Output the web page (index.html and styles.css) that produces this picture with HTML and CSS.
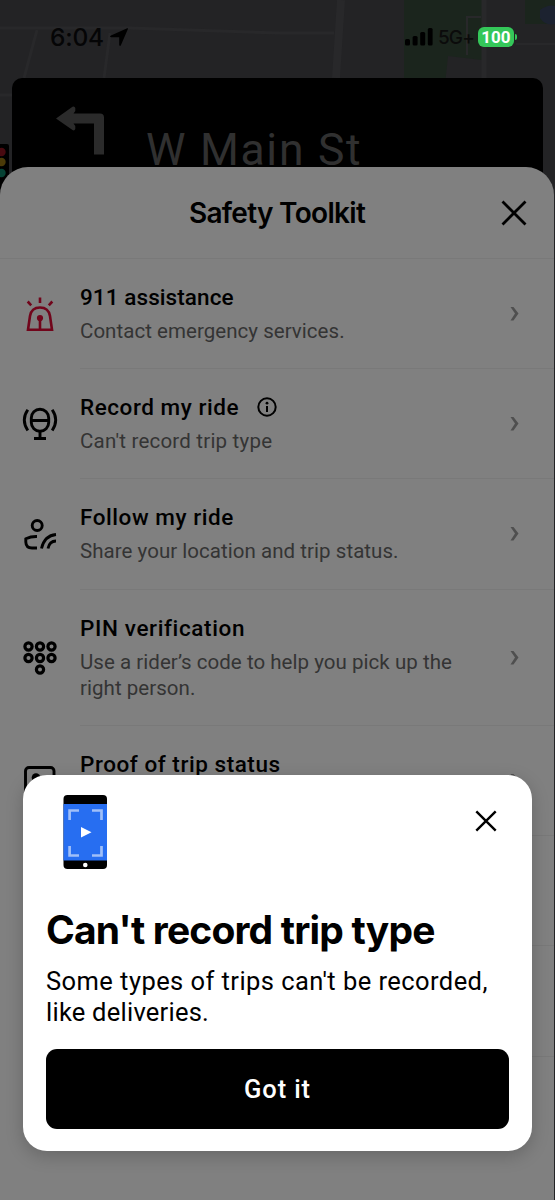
FILE: index.html
```html
<!DOCTYPE html>
<html lang="en">
<head>
<meta charset="utf-8">
<title>Safety Toolkit</title>
<link rel="stylesheet" href="styles.css">
</head>
<body>
<main class="screen">
  <svg class="map" viewBox="0 0 555 200" width="555" height="200" fill="none">
    <path fill="#1b251d" d="M404 0h78v60l-34-4-3 28h-41z"/>
    <path fill="#1b251d" d="M525 0h30v24h-30z"/>
    <path fill="#1c2230" d="M540 10q8-6 15-4v18q-10 2-15-6z"/>
    <g stroke="#28282a" stroke-width="3">
      <path d="M0 28L130 28 280 33H334"/>
      <path d="M37 30L24 78M110 33L104 78M0 95H12"/>
      <path stroke-width="8" d="M341 0L336 78"/>
      <path stroke-width="5" d="M484 0V78"/>
      <path stroke-width="2" d="M467 55V17h14M516 44h39"/>
    </g>
  </svg>

  <div class="app">
    <header class="status">
      <span class="clock">6:04</span>
      <svg class="locate" viewBox="0 0 18 18" width="18" height="18"><path d="M17.2.3Q18.2 0 17.9 1L11 17Q10 19 9.200 17V9.300H1.200Q-1 8.500 1 7.400z"/></svg>
      <svg class="signal" viewBox="0 0 28 18" width="28" height="18"><rect y="11" width="5" height="6.500" rx="1.500"/><rect x="7.600" y="8" width="5" height="9.500" rx="1.500"/><rect x="15.200" y="4" width="5" height="13.500" rx="1.500"/><rect x="22.800" y="0" width="4.800" height="17.500" rx="1.500"/></svg>
      <span class="network">5G+</span>
      <span class="battery">100</span>
    </header>

    <section class="turn">
      <svg class="turn-arrow" viewBox="0 0 49 49" width="49" height="49"><path d="M0 12.500L16.500.7Q18.500-.2 19.300 2V5L17.500 7.600H44Q48 7.600 48 11.500V48.500H38V17.400H17.500L19.300 20V23Q18.300 25.300 16.500 24z"/></svg>
      <span class="street">W Main St</span>
    </section>
    <svg class="traffic-light" viewBox="0 0 10 60" width="10" height="60"><rect x="-8" width="17" height="60" rx="2" fill="#000"/><circle cx="1.500" cy="8" r="4.200" fill="#480a10"/><circle cx="1.500" cy="18" r="4.200" fill="#4b3a08"/><circle cx="1.500" cy="29" r="4.200" fill="#064234"/></svg>

    <section class="sheet">
      <header class="sheet-head">
        <h1 class="sheet-title">Safety Toolkit</h1>
        <svg class="sheet-close" viewBox="0 0 26 26" width="26" height="26"><path d="M1.500 1.500L24.500 24.500M24.500 1.500L1.500 24.500"/></svg>
      </header>

      <article class="row">
        <svg class="icon alarm" viewBox="0 0 40 40" width="40" height="40"><path d="M8 35.800L10 22Q11.500 13.500 20 13.500T30 22L32 35.800zM20 24V36M20 3.500V9M7.700 7.500L11.200 11.300M32.300 7.500L28.800 11.300"/><circle class="solid" cx="20" cy="24" r="3.100"/></svg>
        <div class="text"><h2 class="title t-911">911 assistance</h2><p class="sub s-911">Contact emergency services.</p></div>
        <svg class="chevron" viewBox="0 0 10 16" width="10" height="16"><path d="M.5 1H3.500L8.500 7.500 3.500 14.500H.5L5 7.500z"/></svg>
      </article>

      <article class="row">
        <svg class="icon" viewBox="0 0 40 40" width="40" height="40"><rect x="11.300" y="5.300" width="17.400" height="22" rx="8.700"/><path d="M11.500 16.500H28.500M20 27V34M14 34.500H26M7.800 5.800Q.8 16 7.800 26.500M32.200 5.800Q39.200 16 32.200 26.500"/></svg>
        <div class="text"><h2 class="title">Record my ride <svg class="info" viewBox="0 0 20 20" width="20" height="20"><circle cx="10" cy="10" r="8.700"/><path d="M10 9V15"/><circle class="info-dot" cx="10" cy="6.200" r="1.400"/></svg></h2><p class="sub s-record">Can't record trip type</p></div>
        <svg class="chevron" viewBox="0 0 10 16" width="10" height="16"><path d="M.5 1H3.500L8.500 7.500 3.500 14.500H.5L5 7.500z"/></svg>
      </article>

      <article class="row">
        <svg class="icon" viewBox="0 0 40 40" width="40" height="40"><circle cx="17.200" cy="11.500" r="5"/><path d="M17 22.500Q11 22.300 5.800 24.800V28Q6 34 12 34H17M21.500 34.500Q24.500 21.500 36 20.500M28 34.500Q29.500 27 36 27"/></svg>
        <div class="text"><h2 class="title">Follow my ride</h2><p class="sub">Share your location and trip status.</p></div>
        <svg class="chevron" viewBox="0 0 10 16" width="10" height="16"><path d="M.5 1H3.500L8.500 7.500 3.500 14.500H.5L5 7.500z"/></svg>
      </article>

      <article class="row tall">
        <svg class="icon keypad" viewBox="0 0 40 40" width="40" height="40"><circle cx="8.500" cy="8.500" r="3.600"/><circle cx="20" cy="8.500" r="3.600"/><circle cx="31.500" cy="8.500" r="3.600"/><circle cx="8.500" cy="20" r="3.600"/><circle cx="20" cy="20" r="3.600"/><circle cx="31.500" cy="20" r="3.600"/><circle cx="20" cy="31.500" r="3.600"/></svg>
        <div class="text"><h2 class="title t-pin">PIN verification</h2><p class="sub">Use a rider’s code to help you pick up the<br>right person.</p></div>
        <svg class="chevron" viewBox="0 0 10 16" width="10" height="16"><path d="M.5 1H3.500L8.500 7.500 3.500 14.500H.5L5 7.500z"/></svg>
      </article>

      <article class="row">
        <svg class="icon" viewBox="0 0 40 40" width="40" height="40"><rect x="5.500" y="6.500" width="28.500" height="29" rx="3.500"/><circle class="solid" cx="16" cy="16.500" r="4.300"/></svg>
        <div class="text"><h2 class="title">Proof of trip status</h2></div>
        <svg class="chevron" viewBox="0 0 10 16" width="10" height="16"><path d="M.5 1H3.500L8.500 7.500 3.500 14.500H.5L5 7.500z"/></svg>
      </article>
      <div class="row"></div>
      <div class="row"></div>
    </section>
  </div>

  <section class="dialog">
    <header class="dialog-head">
      <svg class="phone" viewBox="0 0 44 74" width="44" height="74"><rect x=".5" width="43.500" height="74" rx="4"/><path fill="#276ef1" d="M.5 9H44V65.500H.5z"/><g fill="none" stroke="#a0bff8" stroke-width="2.700"><path d="M6.600 25V15.500H16M29 15.500H38.500V25M6.600 51V60.500H16M29 60.500H38.500V51"/></g><path fill="#fff" d="M18 32L28.500 37.200 18 42.500z"/><circle fill="#fff" cx="22.300" cy="70" r="2.300"/></svg>
      <svg class="dialog-close" viewBox="0 0 22 22" width="22" height="22"><path d="M1.300 1.300L20.700 20.700M20.700 1.300L1.300 20.700"/></svg>
    </header>
    <h2 class="dialog-title">Can't record trip type</h2>
    <p class="dialog-text">Some types of trips can't be recorded,<br><span class="line-b">like deliveries.</span></p>
    <button class="confirm">Got it</button>
  </section>
</main>
</body>
</html>
```
FILE: styles.css
```css
* { box-sizing: border-box; }
body { margin: 0; background: #232325; font-family: Roboto, "Liberation Sans", sans-serif; }
h1, h2, p { margin: 0; font-weight: 500; }
svg { display: block; flex: none; }

.screen { display: grid; width: 555px; height: 1200px; overflow: hidden; background: #232325; }
.map, .app, .dialog { grid-area: 1 / 1; }
.app { position: relative; height: 1200px; overflow: hidden; }

.status { display: flex; align-items: center; height: 78px; padding: 0 41px 4px 50px; color: #050506; }
.clock { width: 60px; font: 500 24.500px/24px Inter, sans-serif; letter-spacing: -0.2px; }
.signal { margin-left: auto; }
.network { width: 35px; margin: 2px 5px 0 5px; font: 500 19px/20px Inter, sans-serif; letter-spacing: -0.9px; color: #0b0b0b; }
.battery { position: relative; width: 36px; height: 20px; border-radius: 6px; background: #34c759; color: #fff; font: 700 17px/20px Roboto, sans-serif; text-align: center; }
.battery::after { content: ""; position: absolute; right: -3px; top: 7px; width: 2px; height: 6px; border-radius: 0 2px 2px 0; background: #34c759; }

.turn { display: flex; height: 120px; margin: 0 12px; padding: 28px 0 0 44px; border-radius: 10px; background: #000; }
.turn-arrow { fill: #2b2b2b; }
.street { margin: 21px 0 0 41px; color: #303030; font-size: 44.500px; line-height: 46px; letter-spacing: 1.700px; white-space: nowrap; }
.traffic-light { position: absolute; left: 0; top: 144px; }

.sheet { position: relative; width: 554px; height: 1033px; margin-top: -31px; border-radius: 28px 28px 0 0; background: #808080; }
.sheet-head { display: flex; align-items: center; justify-content: flex-end; height: 92px; padding-right: 27px; border-bottom: 1px solid #797979; }
.sheet-title { flex: 1; padding-left: 53px; font: 600 28px/34px Inter, sans-serif; text-align: center; letter-spacing: -0.700px; }
.sheet-close { fill: none; stroke: #000; stroke-width: 2.800; }

.row { display: flex; height: 110.200px; padding-left: 20px; background: linear-gradient(#797979, #797979) 80px 100% / 100% 1px no-repeat; }
.row.tall { height: 136.500px; }
.row .icon { align-self: center; margin-right: 20px; }
.row .text { flex: 1; }
.row .chevron { align-self: center; margin-right: 34px; fill: #4f4f4f; }
.icon { fill: none; stroke: #000; stroke-width: 2.900; }
.icon .solid { fill: #000; stroke: none; }
.icon.keypad { stroke-width: 3.200; }
.icon.alarm { stroke: #71051b; stroke-width: 2.600; }
.icon.alarm .solid { fill: #71051b; }
.title { display: flex; align-items: center; padding-top: 24px; font-size: 22.500px; line-height: 28px; letter-spacing: 0.550px; white-space: nowrap; }
.t-911 { letter-spacing: 0.080px; }
.t-pin { letter-spacing: 0.620px; }
.sub { margin-top: 7px; color: #343434; font-size: 20.500px; font-weight: 400; line-height: 26.200px; letter-spacing: 0.040px; white-space: nowrap; }
.s-record { letter-spacing: 0.210px; }
.info { margin-left: 18px; fill: none; stroke: #000; stroke-width: 2; }
.info-dot { fill: #000; stroke: none; }

.dialog { z-index: 1; width: 509px; height: 376px; margin: 775px 0 0 23px; padding: 20px 23px 22px; border-radius: 24px; background: #fff; box-shadow: 0 5px 18px rgba(0, 0, 0, .2); }
.dialog-head { display: flex; justify-content: space-between; padding: 0 12px 0 17px; }
.dialog-close { margin-top: 15px; fill: none; stroke: #000; stroke-width: 2.400; }
.dialog-title { margin-top: 37px; font: 700 39px/48px Inter, sans-serif; letter-spacing: -0.820px; white-space: nowrap; }
.dialog-text { margin-top: 12px; font-size: 25.500px; font-weight: 400; line-height: 30.500px; letter-spacing: 0.440px; white-space: nowrap; }
.line-b { letter-spacing: 0.240px; }
.confirm { display: block; width: 463px; height: 80px; margin-top: 22px; border: 0; border-radius: 11px; background: #000; color: #fff; font: 500 25.500px/30px Roboto, sans-serif; letter-spacing: 0.850px; }
```
